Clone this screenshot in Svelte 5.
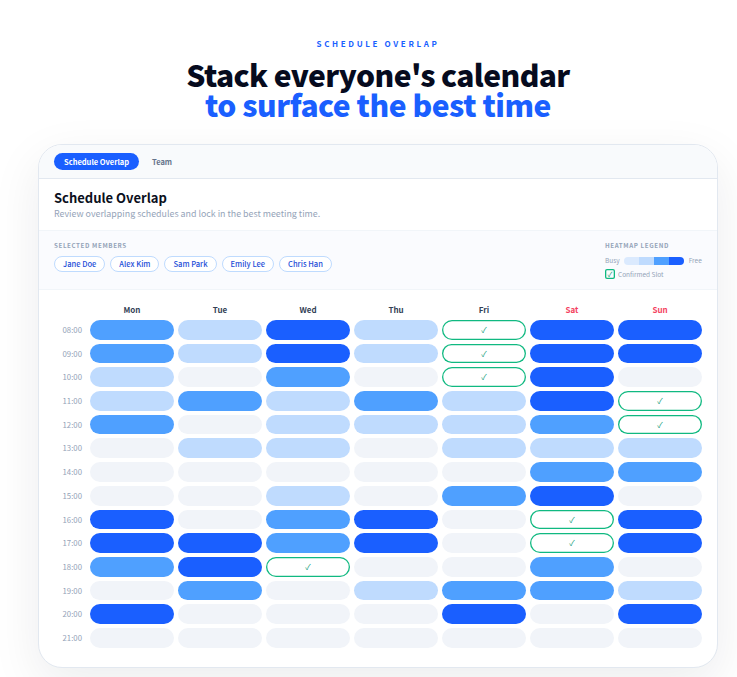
<script lang="ts">
  const members = ['Jane Doe', 'Alex Kim', 'Sam Park', 'Emily Lee', 'Chris Han'];
  const days = ['Mon', 'Tue', 'Wed', 'Thu', 'Fri', 'Sat', 'Sun'];
  const hours = ['08:00', '09:00', '10:00', '11:00', '12:00', '13:00', '14:00', '15:00', '16:00', '17:00', '18:00', '19:00', '20:00', '21:00'];
  // 0-3 = heat level, c = confirmed slot
  const rows = [
    '2131c33',
    '2131c33',
    '1020c30',
    '121213c',
    '201112c',
    '0110111',
    '0000022',
    '0010230',
    '30230c3',
    '33230c3',
    '23c0020',
    '0201221',
    '3000303',
    '0000000'
  ];
</script>

<div class="page">
  <header class="hero">
    <p class="eyebrow">SCHEDULE OVERLAP</p>
    <h1>Stack everyone's calendar<br /><span>to surface the best time</span></h1>
  </header>

  <section class="card">
    <nav class="tabs">
      <button class="tab active">Schedule Overlap</button>
      <button class="tab">Team</button>
    </nav>

    <div class="intro">
      <h2>Schedule Overlap</h2>
      <p>Review overlapping schedules and lock in the best meeting time.</p>
    </div>

    <div class="filters">
      <div>
        <div class="label">SELECTED MEMBERS</div>
        <div class="chips">
          {#each members as m}
            <span class="chip">{m}</span>
          {/each}
        </div>
      </div>
      <div class="legend">
        <div class="label">HEATMAP LEGEND</div>
        <div class="scale">
          <span>Busy</span>
          <div class="bar"><i class="l0"></i><i class="l1"></i><i class="l2"></i><i class="l3"></i></div>
          <span>Free</span>
        </div>
        <div class="confirmed">
          <span class="box">✓</span>
          <span>Confirmed Slot</span>
        </div>
      </div>
    </div>

    <div class="grid">
      <div></div>
      {#each days as d, i}
        <div class="day" class:weekend={i > 4}>{d}</div>
      {/each}
      {#each rows as row, r}
        <div class="hour">{hours[r]}</div>
        {#each row.split('') as c}
          {#if c === 'c'}
            <div class="slot conf">✓</div>
          {:else}
            <div class="slot lv{c}"></div>
          {/if}
        {/each}
      {/each}
    </div>
  </section>
</div>

<style>
  :global(body) {
    background: #fff;
  }

  .page {
    box-sizing: border-box;
    width: 737px;
    height: 677px;
    overflow: hidden;
    padding: 38px 19px 0 38px;
    font-family: "Noto Sans CJK KR", "Noto Sans", sans-serif;
  }

  .hero {
    text-align: center;
    margin-bottom: 25px;
  }

  .eyebrow {
    margin: 0 0 9px;
    font-size: 8px;
    line-height: 12px;
    font-weight: 700;
    letter-spacing: 0.33em;
    color: #1a5fff;
  }

  h1 {
    margin: 0;
    font-size: 30px;
    line-height: 30px;
    font-weight: 900;
    letter-spacing: -0.02em;
    color: #060b1e;
  }

  h1 span {
    letter-spacing: -0.016em;
    color: #1a5fff;
  }

  .card {
    box-sizing: border-box;
    width: 680px;
    height: 524px;
    background: #fff;
    border: 1px solid #e2e8f0;
    border-radius: 24px;
    box-shadow: 0 16px 50px rgba(15, 23, 42, 0.08);
    overflow: hidden;
  }

  .tabs {
    display: flex;
    align-items: center;
    gap: 3px;
    height: 34px;
    box-sizing: border-box;
    padding: 0 15px;
    background: #f8fafc;
    border-bottom: 1px solid #e2e8f0;
  }

  .tab {
    border: 0;
    background: none;
    height: 17px;
    padding: 0 10px;
    border-radius: 9px;
    font: 700 7.5px/17px "Noto Sans CJK KR", sans-serif;
    color: #64748b;
  }

  .tab.active {
    background: #1a5fff;
    color: #fff;
  }

  .intro {
    padding: 11px 15px 10px;
    border-bottom: 1px solid #f1f5f9;
  }

  h2 {
    margin: 0;
    font-size: 13px;
    line-height: 16px;
    font-weight: 700;
    color: #0b1020;
  }

  .intro p {
    margin: 1px 0 0;
    font-size: 8.87px;
    line-height: 13px;
    color: #94a3b8;
  }

  .filters {
    display: flex;
    justify-content: space-between;
    height: 59px;
    box-sizing: border-box;
    padding: 10px 15px 0;
    background: #fafbfe;
    border-bottom: 1px solid #f1f5f9;
  }

  .label {
    font-size: 6.2px;
    line-height: 9px;
    font-weight: 700;
    letter-spacing: 0.1em;
    color: #94a3b8;
  }

  .chips {
    display: flex;
    gap: 5px;
    margin-top: 6px;
  }

  .chip {
    height: 16px;
    box-sizing: border-box;
    padding: 0 8px;
    border: 1px solid #bfdbfe;
    border-radius: 8px;
    background: #fff;
    font-size: 7.55px;
    line-height: 14px;
    font-weight: 500;
    color: #1d4ed8;
  }

  .legend {
    width: 97px;
  }

  .scale {
    display: flex;
    align-items: center;
    gap: 4.5px;
    margin-top: 6px;
    font-size: 6.5px;
    line-height: 9px;
    color: #94a3b8;
  }

  .bar {
    display: flex;
    flex: none;
    width: 60px;
    height: 8px;
    border-radius: 4px;
    overflow: hidden;
  }

  .bar i {
    flex: 1;
  }

  .l0 { background: #dbeafe; }
  .l1 { background: #bfdbfe; }
  .l2 { background: #4fa0ff; }
  .l3 { background: #1a5fff; }

  .confirmed {
    display: flex;
    align-items: center;
    gap: 3px;
    margin-top: 4px;
    font-size: 6.5px;
    color: #94a3b8;
  }

  .box {
    box-sizing: border-box;
    width: 10px;
    height: 10px;
    box-shadow: inset 0 0 0 1.3px #10b981;
    border-radius: 2px;
    font-size: 7px;
    line-height: 10px;
    text-align: center;
    color: #0f9d76;
  }

  .grid {
    display: grid;
    grid-template-columns: 43px repeat(7, 84px);
    grid-template-rows: 14px;
    grid-auto-rows: 19.69px;
    gap: 4px;
    padding: 12px 0 0 4px;
  }

  .day {
    font-size: 8px;
    line-height: 15px;
    font-weight: 700;
    text-align: center;
    color: #334155;
  }

  .day.weekend {
    color: #f43f5e;
  }

  .hour {
    padding-right: 4px;
    font-size: 7.8px;
    line-height: 20px;
    text-align: right;
    color: #94a3b8;
  }

  .slot {
    box-sizing: border-box;
    border-radius: 10px;
  }

  .lv0 { background: #f1f4f9; }
  .lv1 { background: #bfdbfe; }
  .lv2 { background: #4fa0ff; }
  .lv3 { background: #1a5fff; }

  .conf {
    box-shadow: inset 0 0 0 1.3px #10b981;
    background: #fff;
    font-size: 8px;
    line-height: 20px;
    text-align: center;
    color: #0f9d76;
  }
</style>
